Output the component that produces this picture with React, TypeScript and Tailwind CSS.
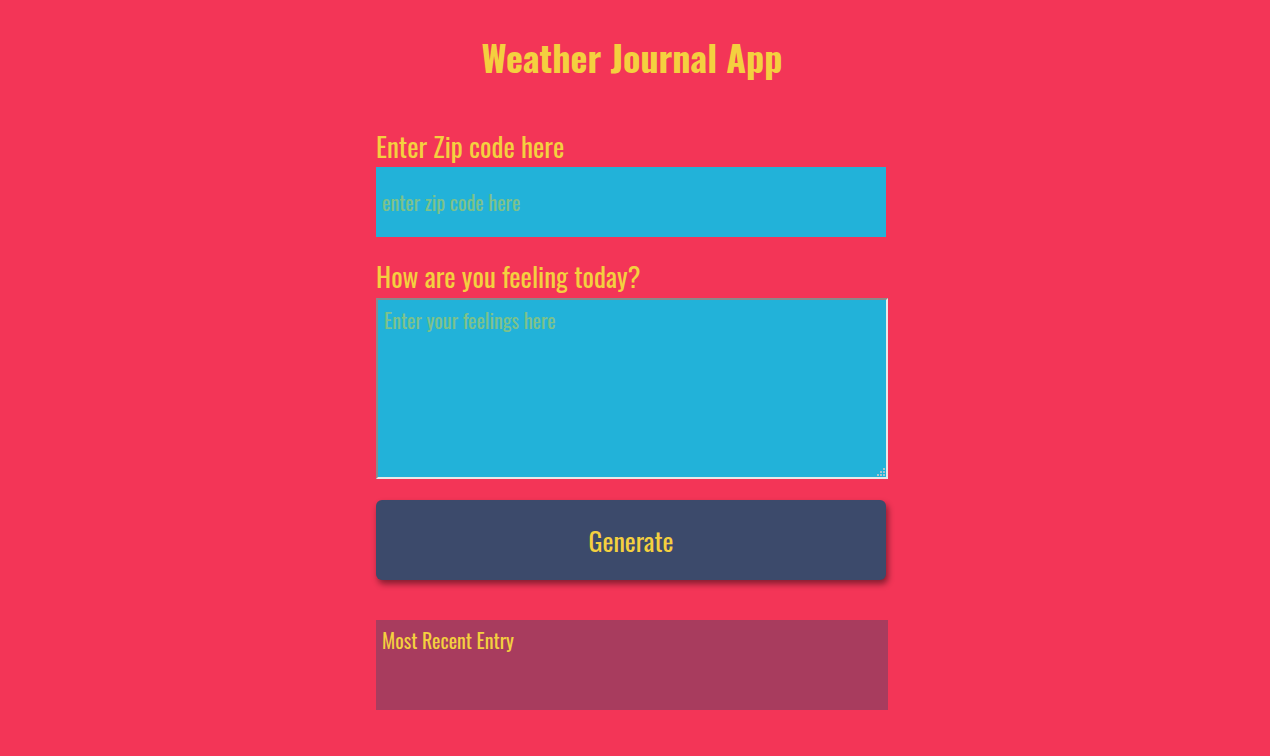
export default function App() {
  const font = { fontFamily: '"Oswald", "Liberation Sans Narrow", "DejaVu Sans Condensed", "Roboto Condensed", sans-serif' };
  return (
    <div className="min-h-[756px] w-full bg-[#f33557] text-[#f4d03f]" style={font}>
      <div className="flex w-[1264px] flex-col items-center">
        <h1 className="mt-[35px] text-[36px] font-bold leading-[44px]">Weather Journal App</h1>
        <div className="mt-[52px] flex w-[512px] flex-col">
          <label className="pb-[6px] text-[27px] leading-[30px]">Enter Zip code here</label>
          <input
            className="h-[70px] w-[510px] bg-[#22b2d9] px-[6px] text-[20px] outline-none placeholder:text-[#7ec28a]"
            placeholder="enter zip code here"
          />
          <label className="mt-[24px] pb-[6px] text-[27px] leading-[31px]">How are you feeling today?</label>
          <div className="relative h-[181px] w-[512px]">
            <textarea
              className="h-full w-full resize-none border-2 border-t-[#8a8a8a] border-l-[#8a8a8a] border-r-[#e8e8e8] border-b-[#e8e8e8] bg-[#22b2d9] px-[6px] py-[5px] text-[20px] leading-[30px] outline-none placeholder:text-[#7ec28a]"
              placeholder="Enter your feelings here"
            />
            <svg className="pointer-events-none absolute bottom-[3px] right-[3px]" width="8" height="8" viewBox="0 0 8 8">
              <rect x="6" y="0" width="2" height="2" fill="#a9c4cf" />
              <rect x="3" y="3" width="2" height="2" fill="#a9c4cf" />
              <rect x="6" y="3" width="2" height="2" fill="#a9c4cf" />
              <rect x="0" y="6" width="2" height="2" fill="#a9c4cf" />
              <rect x="3" y="6" width="2" height="2" fill="#a9c4cf" />
              <rect x="6" y="6" width="2" height="2" fill="#a9c4cf" />
            </svg>
          </div>
          <button className="mt-[21px] h-[80px] w-[510px] rounded-[6px] bg-[#3c4a6b] text-[26px] text-[#f4d03f] shadow-[2px_4px_6px_rgba(0,0,0,0.45)]">
            Generate
          </button>
          <div className="mt-[40px] h-[90px] w-[512px] bg-[#a83c5e] px-[6px] pt-[6px] text-[20px] leading-[28px]">
            Most Recent Entry
          </div>
        </div>
      </div>
    </div>
  );
}
